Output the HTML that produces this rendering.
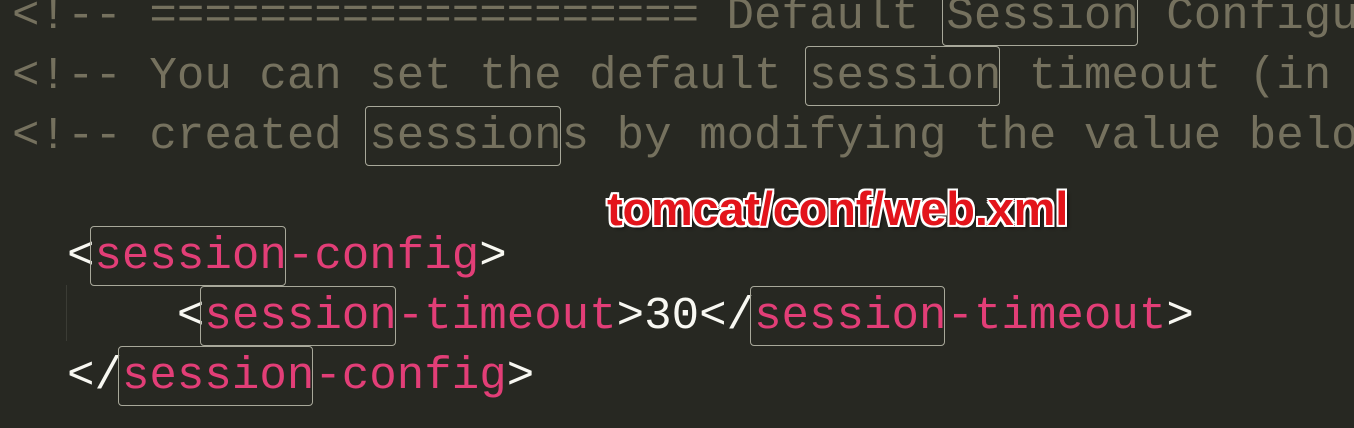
<!DOCTYPE html>
<html><head><meta charset="utf-8"><style>
html,body{margin:0;padding:0;}
body{width:1354px;height:428px;overflow:hidden;background:#272822;position:relative;}
pre{position:absolute;left:12px;top:-14px;margin:0;font-family:"Liberation Mono",monospace;font-size:45.8px;line-height:60px;color:#f8f8f2;white-space:pre;width:1342px;overflow:hidden;}
.c{color:#75715e;}
.t{color:#e23e77;}
.b{position:relative;}
.b::after{content:"";position:absolute;left:-4px;right:1px;top:-4px;bottom:-4px;border:1px solid #a8a89a;border-radius:4px;}
.lbl{position:absolute;left:607px;top:181px;font-family:"Liberation Sans",Arial,sans-serif;font-weight:bold;font-size:47px;letter-spacing:-0.2px;color:#e3141b;
text-shadow:2px 0 0 #fff,-2px 0 0 #fff,0 2px 0 #fff,0 -2px 0 #fff,2px 2px 0 #fff,-2px -2px 0 #fff,2px -2px 0 #fff,-2px 2px 0 #fff,3px 3px 3px rgba(0,0,0,.6);}
.guide{position:absolute;left:66px;top:285px;width:1px;height:56px;background:#3b3c35;}
</style></head><body>
<div class="guide"></div>
<pre><span class="c">&lt;!-- ==================== Default <span class="b">Session</span> Configu</span>
<span class="c">&lt;!-- You can set the default <span class="b">session</span> timeout (in </span>
<span class="c">&lt;!-- created <span class="b">session</span>s by modifying the value belo</span>

  &lt;<span class="t"><span class="b">session</span>-config</span>&gt;
      &lt;<span class="t"><span class="b">session</span>-timeout</span>&gt;30&lt;/<span class="t"><span class="b">session</span>-timeout</span>&gt;
  &lt;/<span class="t"><span class="b">session</span>-config</span>&gt;</pre>
<div class="lbl">tomcat/conf/web.xml</div>
</body></html>
